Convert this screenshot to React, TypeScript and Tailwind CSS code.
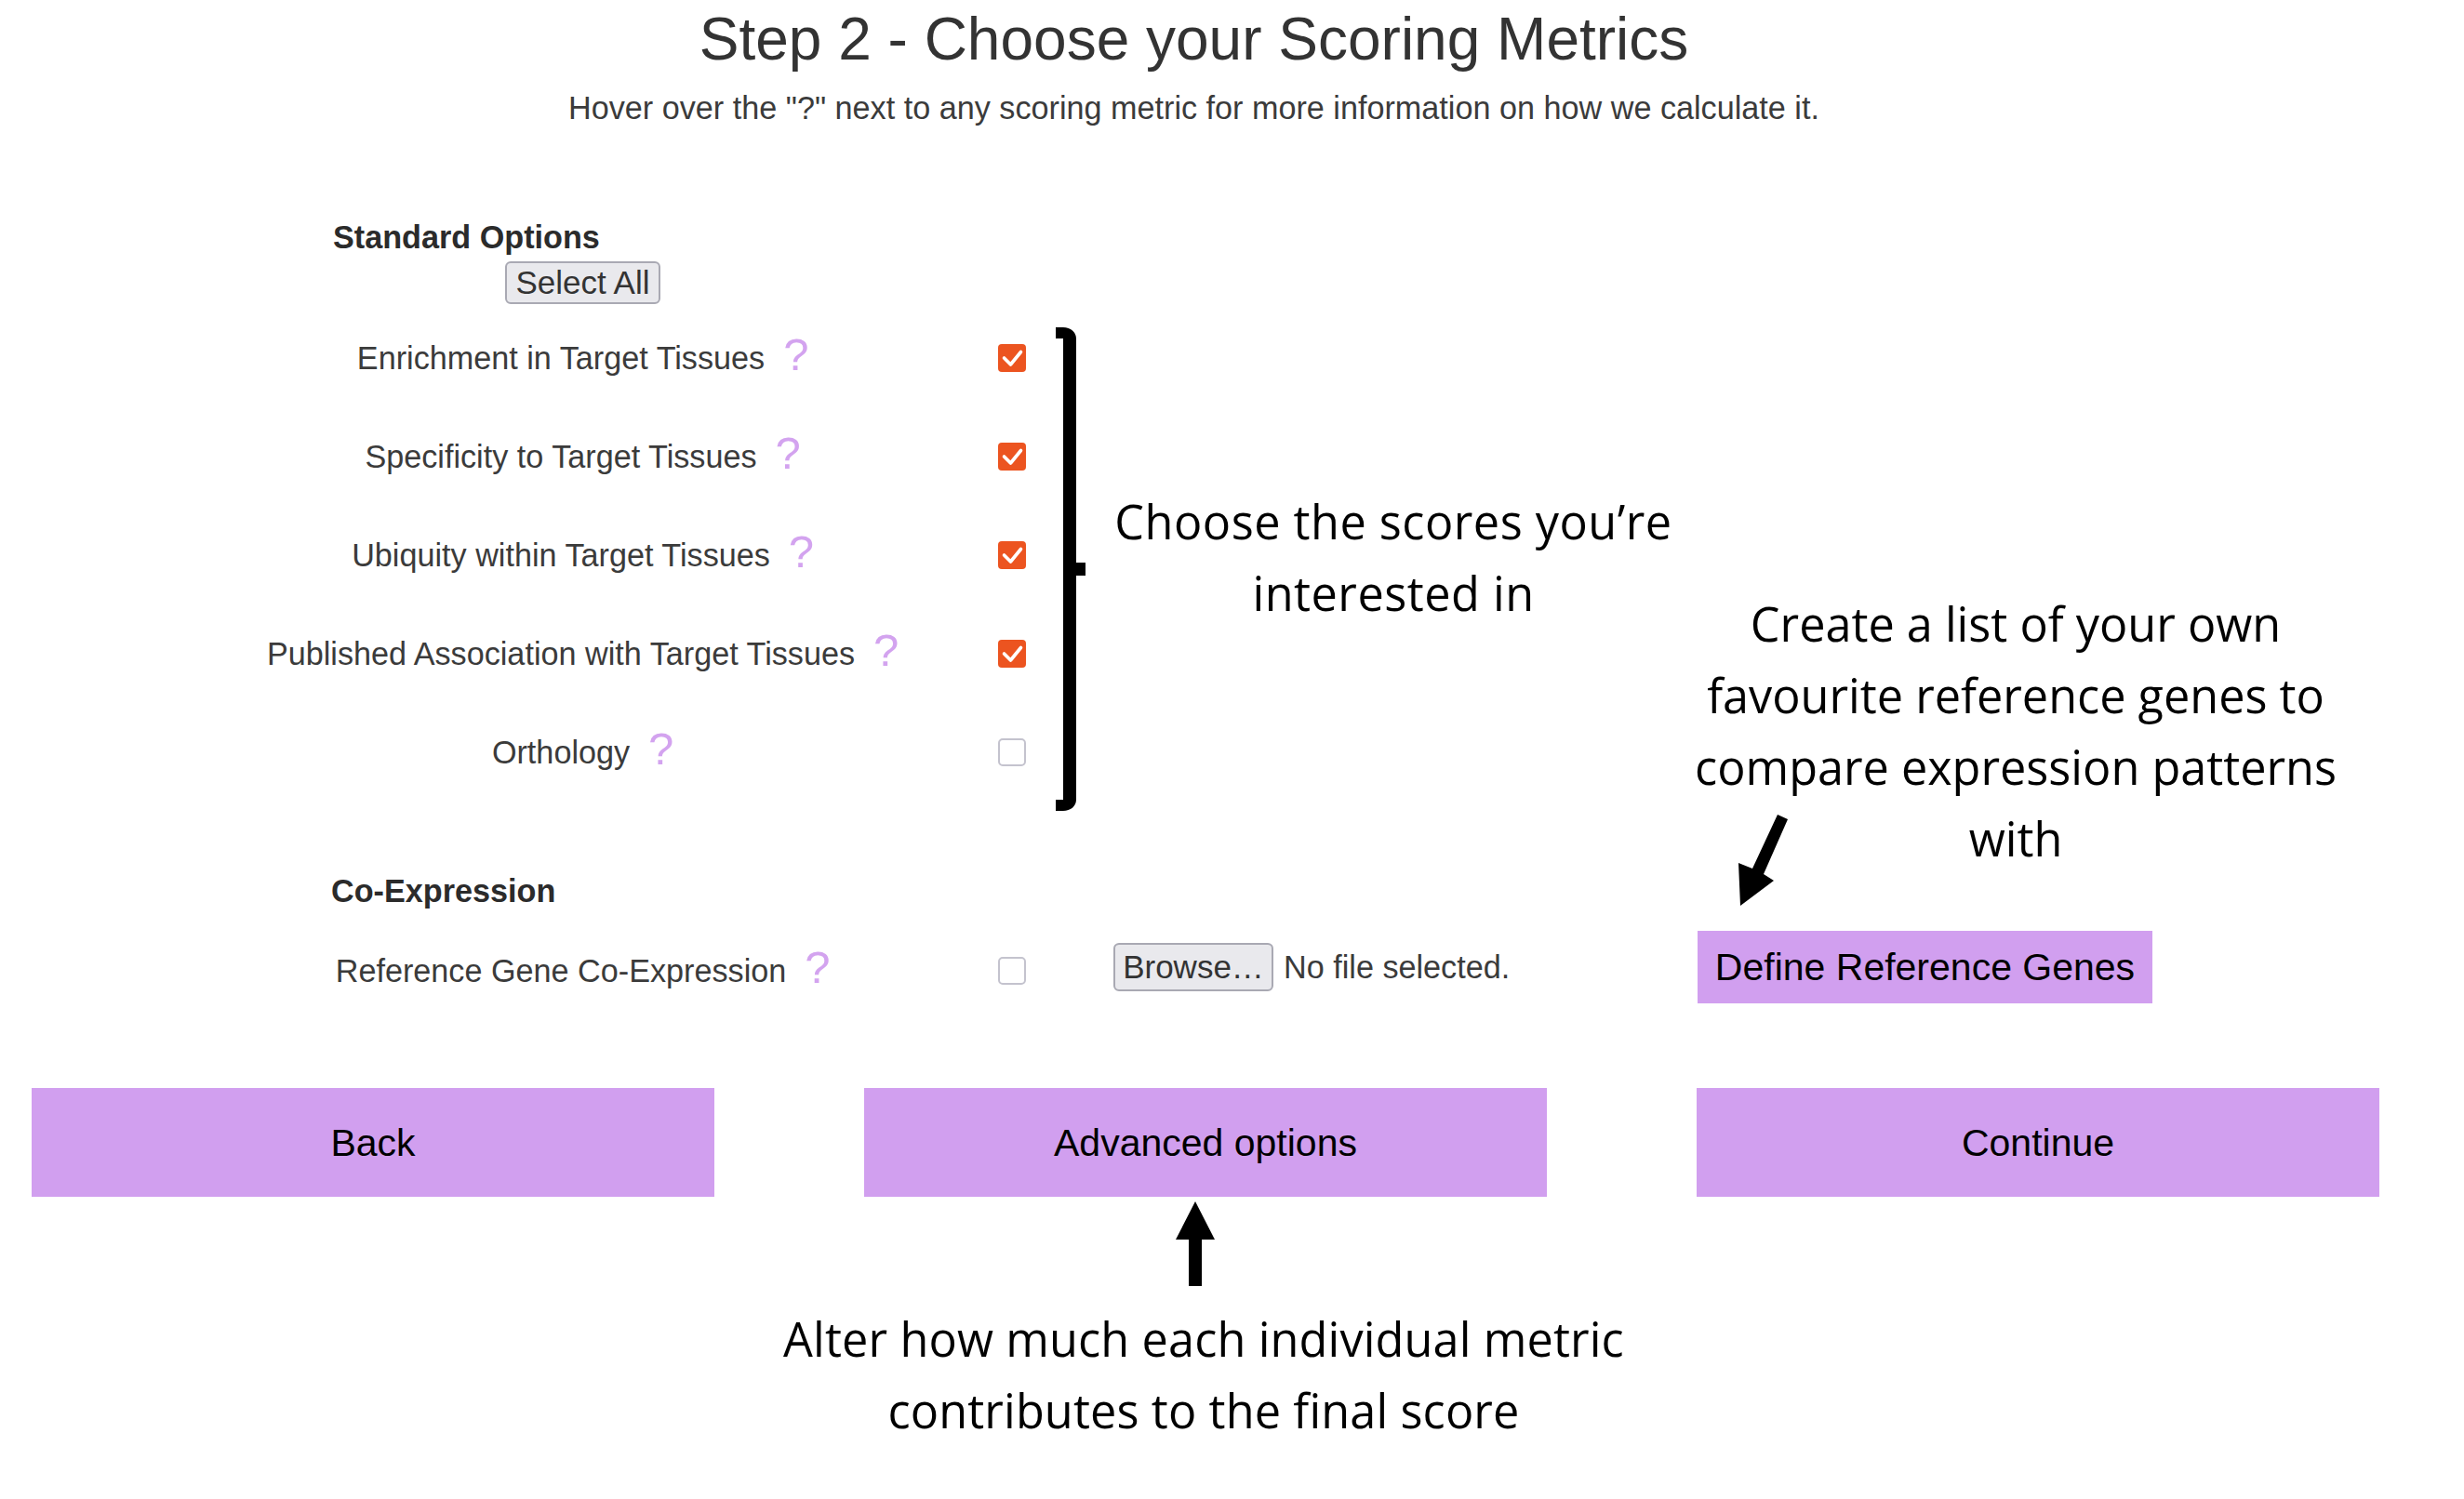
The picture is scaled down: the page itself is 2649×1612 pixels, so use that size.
const sans = "font-['Liberation_Sans',Arial,sans-serif]";
const note = "font-['Open_Sans',sans-serif] text-[50.4px] leading-[77px] text-black text-center absolute";

const metrics = [
  { name: "Enrichment in Target Tissues", checked: true },
  { name: "Specificity to Target Tissues", checked: true },
  { name: "Ubiquity within Target Tissues", checked: true },
  { name: "Published Association with Target Tissues", checked: true },
  { name: "Orthology", checked: false },
];

function Tick({ checked }: { checked: boolean }) {
  if (!checked) {
    return <span className="block w-[30px] h-[30px] rounded-[5px] border-[2px] border-[#c4c3ce] bg-white" />;
  }
  return (
    <span className="flex items-center justify-center w-[30px] h-[30px] rounded-[4px] bg-[#ec5420]">
      <svg viewBox="0 0 30 30" className="w-[30px] h-[30px]">
        <path d="M6.5 15l7 7L24.5 8.5" fill="none" stroke="#fff" strokeWidth="3.6" strokeLinecap="round" strokeLinejoin="round" />
      </svg>
    </span>
  );
}

function Metric({ name }: { name: string }) {
  return (
    <div className="w-[700px] grid grid-cols-[minmax(0,1fr)_auto_minmax(0,1fr)] items-center">
      <span />
      <span className="text-[34.2px] leading-[40px] text-[#3b3b3b] whitespace-nowrap">{name}</span>
      <span className="pl-[20px] text-[49px] leading-[50px] text-[#d3a3ef] -mt-[9px]">?</span>
    </div>
  );
}

export default function App() {
  return (
    <div className={`${sans} relative w-[2649px] h-[1612px] bg-white overflow-hidden`}>
      <header className="text-center">
        <h1 className="pt-[4px] text-[64px] leading-[76px] text-[#333] ml-[-82px]">
          Step 2 - Choose your Scoring Metrics
        </h1>
        <p className="pt-[16px] text-[34.2px] leading-[40px] text-[#3b3b3b] ml-[-82px]">
          Hover over the "?" next to any scoring metric for more information on how we calculate it.
        </p>
      </header>

      <section className="mt-[99px] pl-[253px]">
        <h2 className="ml-[105px] font-bold text-[34.2px] leading-[40px] text-[#2b2b2b]">Standard Options</h2>
        <button className="block ml-[290px] mt-[6px] w-[167px] h-[46px] rounded-[6px] border-[2px] border-[#a9a9b3] bg-[#e9e9ed] text-[35px] leading-[40px] text-[#333]">
          Select All
        </button>
        <div className="mt-[5px] flex flex-col">
          {metrics.map((m) => (
            <div key={m.name} className="h-[106px] flex items-center">
              <Metric name={m.name} />
              <span className="ml-[120px]">
                <Tick checked={m.checked} />
              </span>
            </div>
          ))}
        </div>
      </section>

      <section className="mt-[76px] pl-[253px]">
        <h2 className="ml-[103px] font-bold text-[34.2px] leading-[40px] text-[#2b2b2b]">Co-Expression</h2>
        <div className="mt-[23px] h-[78px] flex items-center">
          <div className="mt-[8px]">
            <Metric name="Reference Gene Co-Expression" />
          </div>
          <span className="ml-[120px] mt-[8px]">
            <Tick checked={false} />
          </span>
          <button className="ml-[94px] w-[172px] h-[52px] rounded-[6px] border-[2px] border-[#a9a9b3] bg-[#e9e9ed] text-[35px] leading-[40px] text-[#333]">
            Browse…
          </button>
          <span className="ml-[11px] w-[445px] text-[34.2px] leading-[40px] text-[#3b3b3b]">No file selected.</span>
          <button className="w-[489px] h-[78px] bg-[#d19fef] text-[41px] leading-[48px] text-black">
            Define Reference Genes
          </button>
        </div>
      </section>

      <nav className="mt-[91px] pl-[34px] flex gap-[161px]">
        {["Back", "Advanced options", "Continue"].map((b) => (
          <button key={b} className="w-[734px] h-[117px] bg-[#d19fef] text-[41px] leading-[48px] text-black">
            {b}
          </button>
        ))}
      </nav>

      {/* annotations drawn over the screenshot */}
      <svg className="absolute left-0 top-0 w-[2649px] h-[1612px] pointer-events-none" viewBox="0 0 2649 1612">
        <path
          d="M1135 352h8c8 0 14 5 14 12V605h10v14h-10V860c0 7-6 12-14 12h-8v-12h8V364h-8z"
          fill="#000"
        />
        <polygon points="1911,876 1922,881 1896,940 1907,947 1871,974 1869,928 1884,934" fill="#000" />
        <polygon points="1285,1292 1306,1333 1292,1333 1292,1383 1278,1383 1278,1333 1264,1333" fill="#000" />
      </svg>

      <p className={`${note} left-[1098px] top-[522px] w-[800px] tracking-[0.5px]`}>
        Choose the scores you’re
        <br />
        interested in
      </p>
      <p className={`${note} left-[1767px] top-[632px] w-[800px]`}>
        Create a list of your own
        <br />
        favourite reference genes to
        <br />
        compare expression patterns
        <br />
        with
      </p>
      <p className={`${note} left-[794px] top-[1401px] w-[1000px] tracking-[0.13px]`}>
        Alter how much each individual metric
        <br />
        contributes to the final score
      </p>
    </div>
  );
}
